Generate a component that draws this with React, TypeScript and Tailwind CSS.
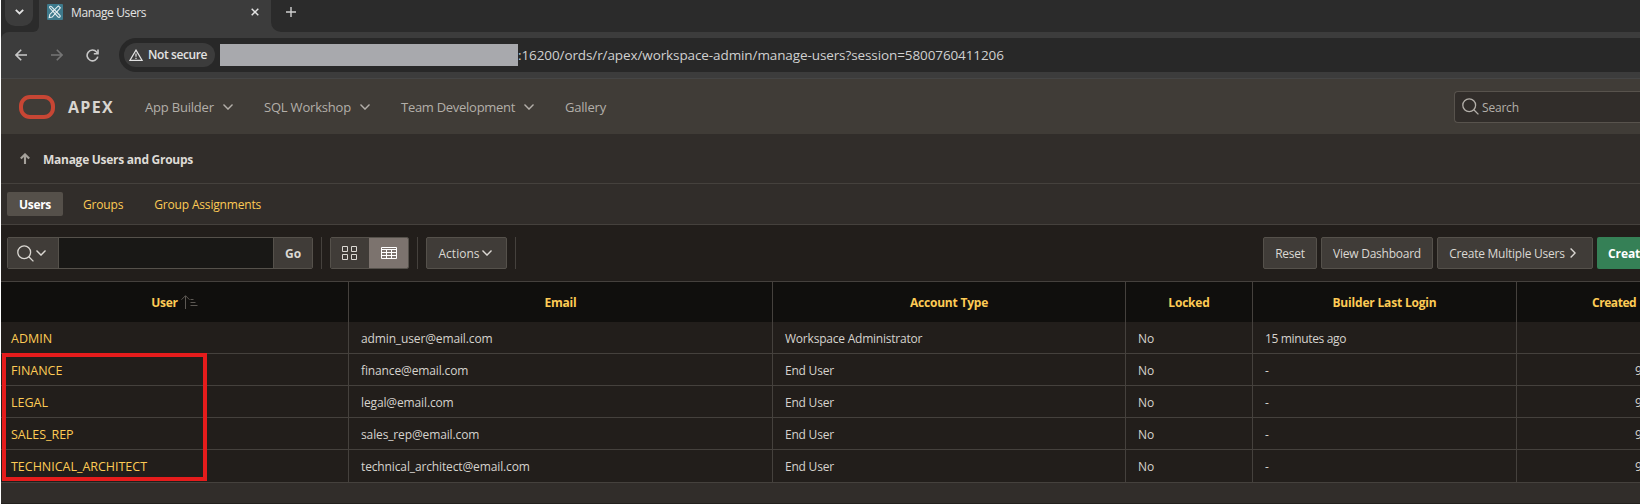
import type { ReactNode } from "react";
import clsx from "clsx";

function Chevron({ className }: { className?: string }) {
  return (
    <svg viewBox="0 0 10 6" className={clsx("h-[6px] w-[10px] shrink-0", className)} fill="none" stroke="currentColor" strokeWidth="1.4">
      <path d="M0.5 0.6 5 5.1 9.5 0.6" />
    </svg>
  );
}

function Magnifier() {
  return (
    <svg viewBox="0 0 17 17" className="h-[17px] w-[17px] shrink-0" fill="none" stroke="currentColor" strokeWidth="1.3">
      <circle cx="7.2" cy="7.2" r="6.4" />
      <path d="m11.8 11.8 4.6 4.6" />
    </svg>
  );
}

function Favicon() {
  return (
    <svg viewBox="0 0 16 16" className="h-4 w-4 shrink-0" fill="none">
      <rect width="16" height="16" rx="1" fill="#3e7a8c" />
      <g stroke="#e8f0f2" strokeWidth="1.1">
        <path d="M2.7 3.8c-.5-1.2.8-2 1.7-1.2l8.7 8.9c.6 1.2-.8 2.4-1.9 1.6z" />
        <path d="m13.4 3.9-2.1-2L2.8 10.4l-.6 3.2 3-.6z" />
      </g>
    </svg>
  );
}

function BrowserChrome() {
  return (
    <div className="shrink-0 font-['Open_Sans',sans-serif]">
      <div className="flex h-8 bg-[#2b2b2b]">
        <div className="ml-1 flex h-[26px] w-7 items-center justify-center rounded-b-[10px] bg-[#3c3c3c] text-[#e3e3e3]">
          <svg viewBox="0 0 9 6" className="-mt-[2px] h-[6px] w-[9px]" fill="none" stroke="currentColor" strokeWidth="1.8">
            <path d="M.8.8 4.5 4.4 8.2.8" />
          </svg>
        </div>
        <div className="flex h-8 flex-col justify-end bg-[#3c3c3c]">
          <div className="h-8 w-[6px] rounded-br-[10px] bg-[#2b2b2b]" />
        </div>
        <div className="flex h-8 w-[232px] items-start bg-[#3c3c3c] pt-1 pl-[8px] text-[12px] text-[#e3e3e3]">
          <Favicon />
          <span className="ml-[8px] h-4 w-[180px] leading-[17px] tracking-[-0.38px]">Manage Users</span>
          <svg viewBox="0 0 8 8" className="mt-[4px] h-2 w-2" fill="none" stroke="currentColor" strokeWidth="1.5">
            <path d="m.7.7 6.6 6.6m0-6.6L.7 7.3" />
          </svg>
        </div>
        <div className="flex flex-1 bg-[#3c3c3c]">
          <div className="flex h-8 flex-1 items-start rounded-bl-[10px] bg-[#2b2b2b] pt-[7px] pl-[15px] text-[#d0d0d0]">
            <svg viewBox="0 0 10 10" className="h-[10px] w-[10px]" fill="none" stroke="currentColor" strokeWidth="1.4">
              <path d="M5 0v10M0 5h10" />
            </svg>
          </div>
        </div>
      </div>
      <div className="bg-[#2b2b2b]">
        <div className="flex h-[46px] items-center rounded-tl-[8px] bg-[#3c3c3c] pl-[14px]">
          <svg viewBox="0 0 12 12" className="h-3 w-3 text-[#c7c7c7]" fill="none" stroke="currentColor" strokeWidth="1.6">
            <path d="M12 6H1M6.2.8 1 6l5.2 5.2" />
          </svg>
          <svg viewBox="0 0 12 12" className="ml-6 h-3 w-3 text-[#757575]" fill="none" stroke="currentColor" strokeWidth="1.6">
            <path d="M0 6h11M5.8.8 11 6l-5.2 5.2" />
          </svg>
          <svg viewBox="0 0 13 13" className="ml-[23px] h-[13px] w-[13px] text-[#c7c7c7]" fill="none" stroke="currentColor" strokeWidth="1.6">
            <path d="M11.8 7.6a5.4 5.4 0 1 1-1.2-4.7l1.3 1.6" />
            <path d="M12 .6v4.2H7.8" />
          </svg>
          <div className="ml-5 flex h-[34px] flex-1 items-center rounded-l-full bg-[#282828] pl-[5px]">
            <div className="flex h-6 w-[91px] items-center rounded-full bg-[#3c3c3c] pl-[5px] text-[12px] font-semibold text-[#e3e3e3]">
              <svg viewBox="0 0 14 12" className="h-3 w-[14px]" fill="none" stroke="currentColor" strokeWidth="1.2">
                <path d="M7 1.1 13 11.3H1z" />
                <path d="M7 4.6v3.2M7 8.8V10" />
              </svg>
              <span className="ml-[5px] whitespace-nowrap tracking-[-0.4px]">Not secure</span>
            </div>
            <div className="ml-[5px] h-[22px] w-[298px] bg-[#a8a9ad]" />
            <span className="text-[13.5px] whitespace-nowrap tracking-[-0.1px] text-[#d0d0d0]">
              :16200/ords/r/apex/workspace-admin/manage-users?session=5800760411206
            </span>
          </div>
        </div>
      </div>
    </div>
  );
}

function NavItem({ width, menu, children }: { width: string; menu?: boolean; children: ReactNode }) {
  return (
    <div className={clsx("flex items-center whitespace-nowrap", width)}>
      <span className="flex-1 pt-[2px]">{children}</span>
      {menu && <Chevron className="mt-px" />}
    </div>
  );
}

function AppHeader() {
  return (
    <header className="flex h-14 shrink-0 items-center border-t border-[#464646] bg-[#403c37] pl-[18px] text-[13px] tracking-[-0.2px] text-[#b3afa9]">
      <div className="h-6 w-9 rounded-[11px] border-[4.5px] border-[#c74634]" />
      <span className="ml-[13px] w-[77px] text-[16px] font-bold tracking-[1.3px] text-[#d8d5d0]">APEX</span>
      <NavItem width="w-[88px]" menu>App Builder</NavItem>
      <div className="w-[31px]" />
      <NavItem width="w-[106px]" menu>SQL Workshop</NavItem>
      <div className="w-[31px]" />
      <NavItem width="w-[133px]" menu><span className="tracking-[-0.28px]">Team Development</span></NavItem>
      <div className="w-[31px]" />
      <NavItem width="w-[60px]">Gallery</NavItem>
      <div className="ml-auto flex h-8 w-[186px] items-center rounded-l-[4px] border border-r-0 border-[#58534d] bg-[#312d2a] pl-[7px] text-[12px]">
        <Magnifier />
        <span className="ml-[3px] pt-[2px]">Search</span>
      </div>
    </header>
  );
}

function TitleBar() {
  return (
    <div className="flex h-[50px] shrink-0 items-center border-b border-[#45413d] bg-[#312d2a] pl-[19px]">
      <svg viewBox="0 0 10 11" className="h-[11px] w-[10px] text-[#a5a19b]" fill="none" stroke="currentColor" strokeWidth="2.1">
        <path d="M5 11V1.6M.8 5.6 5 1.4l4.2 4.2" />
      </svg>
      <h1 className="ml-[13px] pt-[2px] text-[12px] font-bold tracking-[-0.27px] text-[#dedbd6]">Manage Users and Groups</h1>
    </div>
  );
}

function Tabs() {
  return (
    <nav className="flex h-[41px] shrink-0 items-center border-b border-[#45413d] bg-[#312d2a] pl-[6px] text-[12px] tracking-[-0.17px] text-[#fdcb55]">
      <span className="flex h-6 w-14 items-center justify-center rounded-[2px] bg-[#55504a] pt-px font-bold tracking-[-0.3px] text-white">Users</span>
      <span className="ml-5 pt-[2px]">Groups</span>
      <span className="ml-[31px] pt-[2px]">Group Assignments</span>
    </nav>
  );
}

function Divider({ className }: { className: string }) {
  return <div className={clsx("h-8 w-px shrink-0 bg-[#45413d]", className)} />;
}

function Button({ width, children }: { width: string; children: ReactNode }) {
  return (
    <button className={clsx("flex h-8 shrink-0 items-center justify-center rounded-[2px] border border-[#55514b] bg-[#403c38] whitespace-nowrap", width)}>
      {children}
    </button>
  );
}

function ReportToolbar() {
  return (
    <div className="flex h-14 shrink-0 items-center bg-[#221e1b] pl-[6px] text-[12px] tracking-[-0.24px] text-[#dbd8d3]">
      <div className="flex h-8 w-[306px] shrink-0 overflow-hidden rounded-[2px] border border-[#55514b]">
        <div className="flex w-[50px] items-center bg-[#403c38] pl-[9px]">
          <Magnifier />
          <Chevron className="ml-[2px]" />
        </div>
        <div className="flex-1 border-x border-[#55514b] bg-[#191816]" />
        <div className="flex w-[38px] items-center justify-center bg-[#403c38] pt-[2px] font-bold tracking-normal">Go</div>
      </div>
      <Divider className="ml-2" />
      <div className="ml-[8px] flex h-8 w-[79px] shrink-0 overflow-hidden rounded-[2px] border border-[#55514b]">
        <div className="flex w-[38px] items-center justify-center bg-[#403c38] pr-px pb-px">
          <svg viewBox="0 0 15 14" className="h-[14px] w-[15px]" fill="none" stroke="currentColor">
            <path d="M.5.5h5v5h-5zM9.500.5h5v5h-5zM.5 8.500h5v5h-5zM9.500 8.500h5v5h-5z" />
          </svg>
        </div>
        <div className="flex flex-1 items-center justify-center bg-[#7c736e] pl-px text-white">
          <svg viewBox="0 0 16 12" className="h-3 w-4" fill="none" stroke="currentColor">
            <path d="M.5.5h15v11H.5zM0 2.500h16M0 5.500h16M0 8.500h16M5.500 2v10M10.500 2v10" />
          </svg>
        </div>
      </div>
      <Divider className="ml-2" />
      <div className="ml-2 flex">
        <Button width="w-[81px] pr-[2px]">
          <span className="mr-[3px] pt-[2px] tracking-normal">Actions</span>
          <Chevron />
        </Button>
      </div>
      <Divider className="ml-2" />
      <div className="ml-auto flex w-[377px] gap-1 overflow-hidden">
        <Button width="w-[54px]"><span className="pt-[2px]">Reset</span></Button>
        <Button width="w-[112px]"><span className="pt-[2px]">View Dashboard</span></Button>
        <Button width="w-[156px] pr-[5px]">
          <span className="mr-[5px] pt-[2px]">Create Multiple Users</span>
          <svg viewBox="0 0 6 10" className="h-[10px] w-[6px]" fill="none" stroke="currentColor" strokeWidth="1.4">
            <path d="M.6.5 5.100 5 .6 9.500" />
          </svg>
        </Button>
        <button className="flex h-8 w-[90px] shrink-0 items-center rounded-[2px] bg-[#358056] pt-[2px] pl-[11px] font-bold tracking-[-0.1px] whitespace-nowrap text-white">
          Create User
        </button>
      </div>
    </div>
  );
}

const grid = "grid grid-cols-[348px_424px_353px_127px_264px_123px]";

const rows = [
  ["ADMIN", "admin_user@email.com", "Workspace Administrator", "15 minutes ago", ""],
  ["FINANCE", "finance@email.com", "End User", "-", "9"],
  ["LEGAL", "legal@email.com", "End User", "-", "9"],
  ["SALES_REP", "sales_rep@email.com", "End User", "-", "9"],
  ["TECHNICAL_ARCHITECT", "technical_architect@email.com", "End User", "-", "9"],
];

const cell = "flex items-center border-r border-[#45413d] pt-[2px] pl-3 whitespace-nowrap";
const head = "flex items-center justify-center border-r border-[#45413d] pt-[2px]";

function Report() {
  return (
    <div className="relative w-[1639px] shrink-0 overflow-hidden border-t border-[#45413d] bg-[#221e1b] text-[12px] tracking-[-0.13px] text-[#d6d3ce]">
      <div className={clsx(grid, "h-10 bg-[#100f0d] font-bold tracking-[-0.2px] text-[#fdcb55]")}>
        <div className={head}>
          <span className="tracking-[-0.3px]">User</span>
          <svg viewBox="0 0 17 14" className="ml-[3px] h-[14px] w-[17px] -translate-y-px text-[#5c5853]" fill="none" stroke="currentColor">
            <path d="M4.500 14V.8M.5 4.700l4-4 4 4M9.500 4.500h3M9.500 7.500h5M9.500 10.500h7" />
          </svg>
        </div>
        <div className={head}>Email</div>
        <div className={head}>Account Type</div>
        <div className={head}>Locked</div>
        <div className={clsx(head, "tracking-[-0.18px]")}>Builder Last Login</div>
        <div className="flex items-center pt-[2px] pl-[75px] tracking-[-0.45px]">Created</div>
      </div>
      <div>
        {rows.map(([user, email, type, login, created]) => (
          <div key={user} className={clsx(grid, "h-8 border-b border-[#45413d] last:h-[33px]")}>
            <div className="flex items-center border-r border-[#45413d] pt-[3px] pl-[10px] text-[12.5px] tracking-[-0.02px] text-[#fdcb55]">{user}</div>
            <div className={cell}>{email}</div>
            <div className={clsx(cell, "tracking-[-0.22px]")}>{type}</div>
            <div className={cell}>No</div>
            <div className={clsx(cell, "tracking-[-0.35px]")}>{login}</div>
            <div className="flex items-center overflow-hidden pt-[2px] pl-[118px]">{created}</div>
          </div>
        ))}
      </div>
      <div className="absolute top-[71px] left-px h-[128px] w-[205px] border-4 border-[#e51c1c]" />
    </div>
  );
}

export default function App() {
  return (
    <div className="h-[504px] w-[1640px] overflow-hidden bg-white pl-px font-['Open_Sans','Noto_Sans',sans-serif]">
      <div className="flex h-full w-[1639px] flex-col overflow-hidden bg-[#312d2a]">
        <BrowserChrome />
        <AppHeader />
        <TitleBar />
        <Tabs />
        <ReportToolbar />
        <Report />
        <div className="flex-1 border-b border-[#23201d] bg-[#312d2a]" />
      </div>
    </div>
  );
}
